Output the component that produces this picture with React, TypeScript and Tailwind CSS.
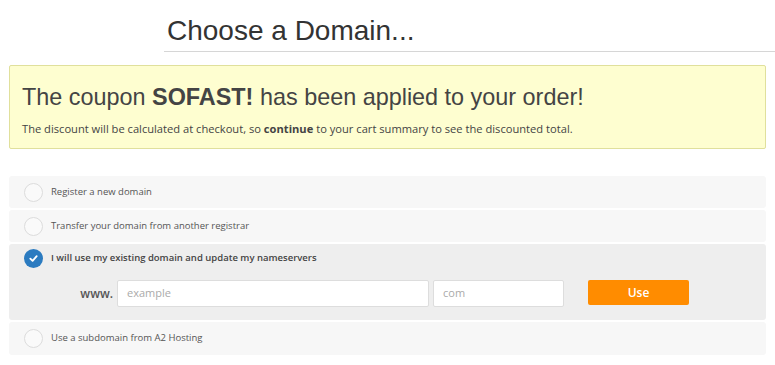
import React from "react";

function Radio({ checked }: { checked?: boolean }) {
  if (checked) {
    return (
      <div className="w-[19px] h-[19px] rounded-full bg-[#2b7bc0] flex items-center justify-center shrink-0">
        <svg width="11" height="11" viewBox="0 0 12 12">
          <path d="M2.5 6.2 L5 8.5 L9.5 3.5" fill="none" stroke="#fff" strokeWidth="2" strokeLinecap="round" strokeLinejoin="round" />
        </svg>
      </div>
    );
  }
  return <div className="w-[19px] h-[19px] rounded-full border border-[#dcdcdc] bg-[#fafafa] shrink-0" />;
}

function Row({ label, checked, h, children }: { label: string; checked?: boolean; h: string; children?: React.ReactNode }) {
  return (
    <div className={`${checked ? "bg-[#eeeeee]" : "bg-[#f7f7f7]"} rounded-[3px]`}>
      <div className={`flex items-center ${h} pl-[15px] gap-[8px]`}>
        <Radio checked={checked} />
        <span className={`text-[9.5px] ${checked ? "font-semibold text-[#444]" : "text-[#555]"}`}>{label}</span>
      </div>
      {children}
    </div>
  );
}

export default function App() {
  return (
    <div className="w-[775px] h-[365px] bg-white overflow-hidden" style={{ fontFamily: '"Open Sans", sans-serif' }}>
      <div className="ml-[164px] pt-[14px]">
        <h1 className="text-[28px] leading-[34px] text-[#333] pl-[3px] pb-[3px] border-b border-[#d6d6d6]" style={{ fontFamily: '"Liberation Sans", Arial, sans-serif' }}>
          Choose a Domain...
        </h1>
      </div>
      <div className="mx-[9px] mt-[13px] h-[84px] border border-[#e0e09c] bg-[#fefed0] rounded-[2px] px-[12px] pt-[18px]">
        <div className="text-[23.4px] leading-[26px] text-[#444]" style={{ fontFamily: '"Liberation Sans", Arial, sans-serif' }}>
          The coupon <b>SOFAST!</b> has been applied to your order!
        </div>
        <div className="text-[11.15px] text-[#444] mt-[11px]">
          The discount will be calculated at checkout, so <b>continue</b> to your cart summary to see the discounted total.
        </div>
      </div>
      <div className="mx-[9px] mt-[27px] flex flex-col gap-[2px]">
        <Row label="Register a new domain" h="h-[32px]" />
        <Row label="Transfer your domain from another registrar" h="h-[32px]" />
        <Row label="I will use my existing domain and update my nameservers" checked h="h-[29px]">
          <div className="flex items-center pt-[7px] pb-[13px]">
            <span className="w-[108px] text-right pr-[4px] text-[12px] text-[#555] font-semibold">www.</span>
            <div className="w-[312px] h-[27px] bg-white border border-[#dddddd] rounded-[2px] flex items-center px-[9px] text-[11px] text-[#aaa]">example</div>
            <div className="ml-[4px] w-[131px] h-[27px] bg-white border border-[#dddddd] rounded-[2px] flex items-center px-[9px] text-[11px] text-[#aaa]">com</div>
            <div className="ml-[24px] -mt-[2px] w-[101px] h-[25px] bg-[#ff8c00] rounded-[2px] flex items-center justify-center text-[12px] font-semibold text-white">Use</div>
          </div>
        </Row>
        <Row label="Use a subdomain from A2 Hosting" h="h-[33px]" />
      </div>
    </div>
  );
}
